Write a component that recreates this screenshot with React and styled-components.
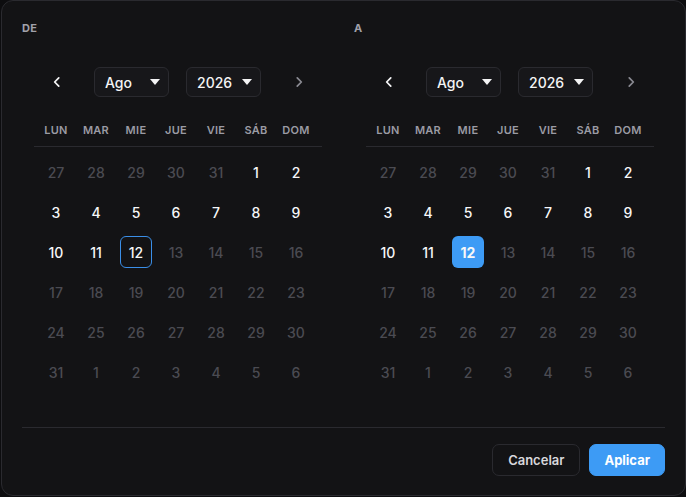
import React, { useState } from 'react';
import styled, { createGlobalStyle } from "styled-components";

const GlobalStyle = createGlobalStyle`
    html, body {
        margin: 0;
        padding: 0;
        background: #0d0d0f;
    }
    body {
        font-family: Inter, "Noto Sans", sans-serif;
        -webkit-font-smoothing: antialiased;
    }
`

const WEEKDAYS = ['LUN', 'MAR', 'MIE', 'JUE', 'VIE', 'SÁB', 'DOM'];

// august 2026, monday first
function buildDays() {
    const days = [];
    for (let d = 27; d <= 31; d++) days.push({ day: d, outside: true });
    for (let d = 1; d <= 31; d++) days.push({ day: d, outside: false });
    for (let d = 1; d <= 6; d++) days.push({ day: d, outside: true });
    return days;
}

function Chevron({ dir, muted }) {
    return (
        <svg width="14" height="14" viewBox="0 0 24 24" fill="none"
            stroke={muted ? '#8a8a92' : '#f4f4f5'} strokeWidth="3"
            strokeLinecap="round" strokeLinejoin="round">
            {dir === 'left' ? <path d="M15 5l-7 7 7 7" /> : <path d="M9 5l7 7-7 7" />}
        </svg>
    )
}

function Caret() {
    return (
        <svg width="10" height="6" viewBox="0 0 10 6">
            <path d="M0 0h10L5 6z" fill="#f4f4f5" />
        </svg>
    )
}

function Calendar({ label, selected, variant }) {
    const days = buildDays();

    return (
        <Column>
            <Label>{label}</Label>
            <Month>
                <Nav>
                    <NavButton><Chevron dir="left" /></NavButton>
                    <Selects>
                        <Select>Ago <Caret /></Select>
                        <Select>2026 <Caret /></Select>
                    </Selects>
                    <NavButton><Chevron dir="right" muted /></NavButton>
                </Nav>
                <Weekdays>
                    {WEEKDAYS.map((w) => <Weekday key={w}>{w}</Weekday>)}
                </Weekdays>
                <Days>
                    {days.map((item, i) => {
                        const disabled = item.outside || item.day > selected;
                        const isSel = !item.outside && item.day === selected;
                        return (
                            <Cell key={i}>
                                <Day $disabled={disabled} $selected={isSel ? variant : null}>
                                    {item.day}
                                </Day>
                            </Cell>
                        )
                    })}
                </Days>
            </Month>
        </Column>
    )
}

function App() {
    const [from] = useState(12);
    const [to] = useState(12);

    return (
        <>
            <GlobalStyle />
            <Panel>
                <Columns>
                    <Calendar label="DE" selected={from} variant="outline" />
                    <Calendar label="A" selected={to} variant="filled" />
                </Columns>
                <Footer>
                    <Button>Cancelar</Button>
                    <Button $primary>Aplicar</Button>
                </Footer>
            </Panel>
        </>
    )
}

const Panel = styled.div`
    box-sizing: border-box;
    width: 685px;
    height: 496px;
    margin-left: 1px;
    padding: 19px 20px 19px 20px;
    background: #131315;
    border: 1px solid #2a2a2f;
    border-radius: 12px;
    display: flex;
    flex-direction: column;
`

const Columns = styled.div`
    display: grid;
    grid-template-columns: 310px 310px;
    column-gap: 22px;
`

const Column = styled.div`
    display: flex;
    flex-direction: column;
`

const Label = styled.div`
    height: 16px;
    line-height: 16px;
    font-size: 11px;
    font-weight: 700;
    color: #a1a1aa;
    letter-spacing: 0.3px;
`

const Month = styled.div`
    width: 288px;
    margin-left: 12px;
    margin-top: 31px;
`

const Nav = styled.div`
    height: 30px;
    display: flex;
    align-items: center;
    padding-left: 9px;
`

const NavButton = styled.button`
    width: 28px;
    height: 28px;
    padding: 0;
    border: none;
    background: transparent;
    display: flex;
    align-items: center;
    justify-content: center;
    cursor: pointer;
`

const Selects = styled.div`
    display: flex;
    gap: 17px;
    margin: 0 24px 0 23px;
`

const Select = styled.div`
    box-sizing: border-box;
    width: 75px;
    height: 30px;
    padding: 0 8px 0 10px;
    display: flex;
    align-items: center;
    justify-content: space-between;
    background: #17171a;
    border: 1px solid #2a2a2f;
    border-radius: 6px;
    font-size: 14px;
    font-weight: 500;
    color: #f4f4f5;
`

const Weekdays = styled.div`
    margin-top: 17px;
    height: 32px;
    display: grid;
    grid-template-columns: repeat(7, 40px);
    padding-left: 2px;
    border-bottom: 1px solid #2a2a2f;
`

const Weekday = styled.div`
    display: flex;
    align-items: center;
    justify-content: center;
    font-size: 11px;
    font-weight: 600;
    color: #9b9ba4;
    letter-spacing: 0.3px;
`

const Days = styled.div`
    margin-top: 5px;
    display: grid;
    grid-template-columns: repeat(7, 40px);
    grid-auto-rows: 40px;
    padding-left: 2px;
`

const Cell = styled.div`
    display: flex;
    align-items: center;
    justify-content: center;
`

const Day = styled.div`
    box-sizing: border-box;
    width: 32px;
    height: 32px;
    display: flex;
    align-items: center;
    justify-content: center;
    border-radius: 6px;
    font-size: 14px;
    font-weight: ${(p) => (p.$selected === 'filled' ? 700 : 500)};
    color: ${(p) => (p.$disabled ? '#4b4b52' : '#f7f7f8')};
    background: ${(p) => (p.$selected === 'filled' ? '#3d9bf5' : 'transparent')};
    border: 1px solid ${(p) => (p.$selected === 'outline' ? '#3b8fe8' : 'transparent')};
`

const Footer = styled.div`
    margin-top: 35px;
    padding-top: 16px;
    border-top: 1px solid #2a2a2f;
    display: flex;
    justify-content: flex-end;
    gap: 9px;
`

const Button = styled.button`
    box-sizing: border-box;
    height: 32px;
    padding: 0 ${(p) => (p.$primary ? '14px' : '15px')};
    border-radius: 7px;
    border: 1px solid ${(p) => (p.$primary ? '#3d9bf5' : '#2a2a2f')};
    background: ${(p) => (p.$primary ? '#3d9bf5' : 'transparent')};
    color: ${(p) => (p.$primary ? '#ffffff' : '#d8d8dc')};
    font-family: Inter, "Noto Sans", sans-serif;
    font-size: 13px;
    font-weight: ${(p) => (p.$primary ? 700 : 600)};
    cursor: pointer;
`

export default App;
